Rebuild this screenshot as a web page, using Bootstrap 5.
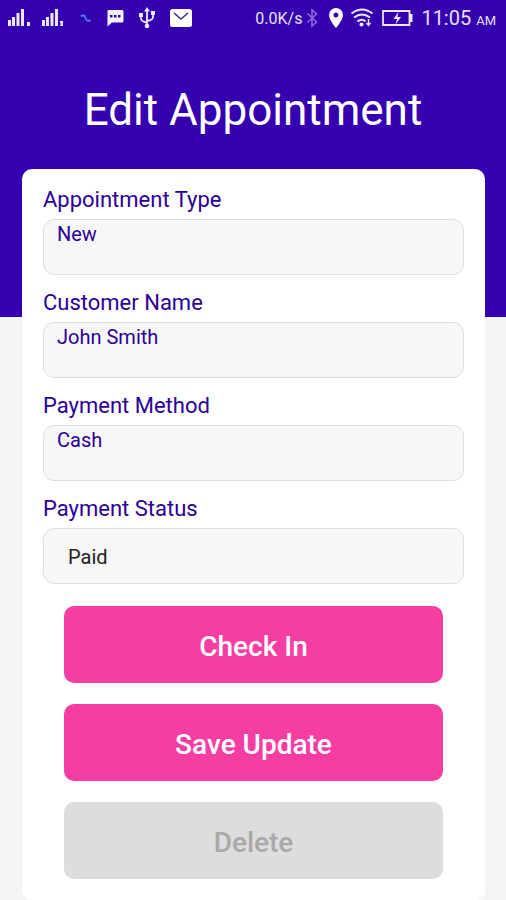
<!DOCTYPE html>
<html lang="en">
<head>
<meta charset="utf-8">
<meta name="viewport" content="width=device-width, initial-scale=1">
<title>Edit Appointment</title>
<link href="https://cdn.jsdelivr.net/npm/bootstrap@5.3.0/dist/css/bootstrap.min.css" rel="stylesheet">
<style>
  body { font-family: Roboto, "Liberation Sans", sans-serif; background: #f4f4f4; }
  .hero { background: #3400b0; color: #fff; padding-bottom: 179px; }
  .status-bar { height: 36px; padding: 0 10px 0 8px; color: #e8e0fb; }
  .status-bar svg { display: block; flex: none; }
  .notices { gap: 14px; }
  .net-speed { font-size: 16px; line-height: 20px; padding-top: 2px; }
  .clock { font-size: 20px; line-height: 24px; padding-top: 2px; }
  .clock small { font-size: 13px; }
  .page-title { font-size: 44px; line-height: 56px; margin: 46px 0 0; font-weight: 400; }
  .sheet { margin: -148px 21px 0 22px; padding: 19px 21px 21px; border-radius: 10px; background: #fff; }
  .field-label { font-size: 22px; line-height: 24px; margin-bottom: 7px; color: #2b0099; }
  .field-box, .field-box:focus { background: #f7f7f7; border: 1px solid #dedede; border-radius: 11px; height: 56px; font-size: 20px; line-height: 24px; }
  .field-text, .field-text:focus { color: #2b0099; padding: 1px 13px 28px; }
  .field-select, .field-select:focus { color: #222; padding: 2px 24px 0; }
  .actions { margin-top: 22px; gap: 21px; padding: 0 21px; }
  .action { height: 77px; border: 0; border-radius: 10px; font-size: 28px; line-height: 32px; font-weight: 500; padding-top: 11px; }
  .action-pink, .action-pink:hover { background: #f63da4; color: #fff; }
  .action-off:disabled { background: #ddd; color: #a9a9a9; opacity: 1; }
</style>
<script src="https://cdn.jsdelivr.net/npm/bootstrap@5.3.0/dist/js/bootstrap.bundle.min.js" defer></script>
</head>
<body>
<header class="hero">
  <div class="status-bar d-flex align-items-center justify-content-between">
    <div class="notices d-flex align-items-center">
      <svg width="24" height="20" viewBox="0 0 24 20" fill="#eee8ff" aria-hidden="true"><path d="M0 12h3v6H0zM4 9h3v9H4zM8.500 5h3v13h-3zM13 1h3v17h-3zM19 14h3v4h-3z"/></svg>
      <svg width="20" height="20" viewBox="4 0 20 20" overflow="visible" fill="#eee8ff" aria-hidden="true"><path d="M0 12h3v6H0zM4 9h3v9H4zM8.500 5h3v13h-3zM13 1h3v17h-3zM18 13h3v5h-3v-1.500h1.500v-1H18z"/></svg>
      <svg width="12" height="14" viewBox="0 0 12 14" fill="none" stroke="#4f86f5" stroke-width="1.800" aria-hidden="true"><path d="M1 5.500q3-3 4.500 1.500t5 2"/></svg>
      <svg width="18" height="18" viewBox="0 0 18 18" aria-hidden="true"><path fill="#f6f2ff" d="M2 1h14q1.500 0 1.500 1.500V12q0 1.500-1.500 1.500H6L1.500 17.500V2.500Q1.500 1 2 1z"/><path fill="#3400b0" d="M4 6h2.500v2.500H4zM8 6h2.500v2.500H8zM12 6h2.500v2.500H12z"/></svg>
      <svg width="18" height="22" viewBox="0 0 18 22" fill="none" stroke="#eee8ff" stroke-width="1.800" aria-hidden="true"><path d="M9 3v15M9 15.500q-6-1-6-4V8M9 14q6-1 6-4V6"/><path fill="#eee8ff" stroke="none" d="M9 0l3 4.500H6zM1 6h4v4H1zM13 4h4v4h-4z"/><circle cx="9" cy="19" r="2.300" fill="#eee8ff" stroke="none"/></svg>
      <svg width="22" height="18" viewBox="0 0 22 18" aria-hidden="true"><rect width="22" height="18" rx="2.500" fill="#fff"/><path d="M4 4l7 6 7-6" fill="none" stroke="#42308a" stroke-width="1.600"/></svg>
    </div>
    <div class="d-flex align-items-center">
      <span class="net-speed">0.0K/s</span>
      <svg class="ms-1" width="12" height="20" viewBox="0 0 12 20" fill="none" stroke="#8b68dc" stroke-width="1.600" aria-hidden="true"><path d="M1.500 5.500l9 8.500L6 18V2l4.500 4-9 8.500"/></svg>
      <svg class="ms-2" width="20" height="20" viewBox="0 0 20 20" aria-hidden="true"><path fill="#fff" fill-rule="evenodd" d="M10 0a7 7 0 0 1 7 7c0 5-7 13-7 13S3 12 3 7a7 7 0 0 1 7-7zm0 4.500a2.500 2.500 0 1 0 0 5 2.500 2.500 0 0 0 0-5z"/></svg>
      <svg class="ms-1" width="24" height="20" viewBox="0 0 24 20" fill="none" stroke="#eee8ff" stroke-width="2" aria-hidden="true"><path d="M1.500 5.500Q12-2.500 22.500 5.500M4 9.500q8-6 16 0M7.500 13.500q4.500-3.500 8 0"/><circle cx="11.500" cy="16.500" r="2" fill="#eee8ff" stroke="none"/><path stroke-width="1.400" d="M18.500 11v6M16.500 15l2 2.500 2-2.500"/></svg>
      <svg class="ms-2" width="31" height="16" viewBox="0 0 31 16" fill="none" aria-hidden="true"><path stroke="#eee8ff" stroke-width="1.800" d="M1 1h26.500v14H1z"/><path fill="#eee8ff" d="M28 4h2.500v8H28zM16.500 2l-5 7h3.500l-1.500 5.500 5.500-7.500h-3.500z"/></svg>
      <span class="clock ms-2">11:05 <small>AM</small></span>
    </div>
  </div>
  <h1 class="page-title text-center">Edit Appointment</h1>
</header>
<main class="sheet">
  <form>
    <div class="mb-3">
      <label class="field-label d-block" for="type">Appointment Type</label>
      <input class="form-control field-box field-text" id="type" type="text" value="New">
    </div>
    <div class="mb-3">
      <label class="field-label d-block" for="customer">Customer Name</label>
      <input class="form-control field-box field-text" id="customer" type="text" value="John Smith">
    </div>
    <div class="mb-3">
      <label class="field-label d-block" for="method">Payment Method</label>
      <input class="form-control field-box field-text" id="method" type="text" value="Cash">
    </div>
    <div>
      <label class="field-label d-block" for="status">Payment Status</label>
      <select class="form-select field-box field-select" id="status"><option>Paid</option></select>
    </div>
    <div class="actions d-grid">
      <button class="btn action action-pink" type="button">Check In</button>
      <button class="btn action action-pink" type="button">Save Update</button>
      <button class="btn action action-off" type="button" disabled>Delete</button>
    </div>
  </form>
</main>
</body>
</html>
